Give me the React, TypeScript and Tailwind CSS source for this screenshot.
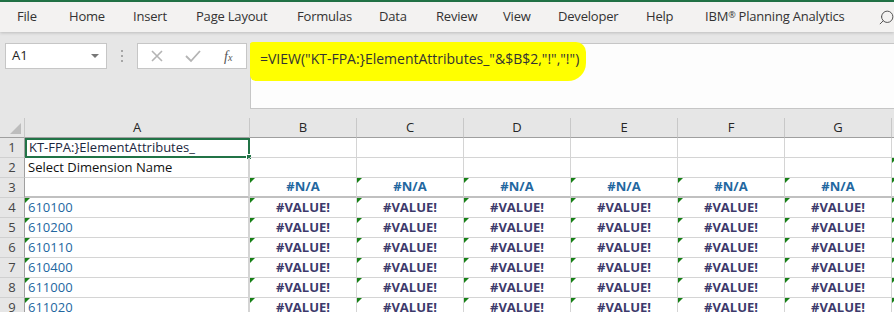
import { Search } from 'lucide-react';

const tabs = [
  { t: 'File', w: 'w-[52px]' },
  { t: 'Home', w: 'w-[64px]' },
  { t: 'Insert', w: 'w-[63px]' },
  { t: 'Page Layout', w: 'w-[101px]' },
  { t: 'Formulas', w: 'w-[82px]' },
  { t: 'Data', w: 'w-[57px]' },
  { t: 'Review', w: 'w-[67px]' },
  { t: 'View', w: 'w-[55px]' },
  { t: 'Developer', w: 'w-[88px]' },
  { t: 'Help', w: 'w-[59px]' },
];
const cols = ['B', 'C', 'D', 'E', 'F', 'G'];
const codes = ['610100', '610200', '610110', '610400', '611000', '611020'];
const formula = '=VIEW("KT-FPA:}ElementAttributes_"&$B$2,"!","!")';

const Flag = () => (
  <div className="absolute left-0 top-0 h-0 w-0 border-t-[5px] border-r-[5px] border-t-[#168016] border-r-transparent" />
);

const RowHead = ({ n }: { n: number }) => (
  <div className="flex h-[20px] items-center justify-center border-b border-r border-b-[#d0d0d0] border-r-[#9f9f9f] bg-[#e6e6e6] text-[13px] text-[#444]">
    {n}
  </div>
);

const Cell = ({ children, flag, thickBottom, className = '' }: { children?: React.ReactNode; flag?: boolean; thickBottom?: boolean; className?: string }) => (
  <div
    className={`relative flex h-[20px] items-center whitespace-nowrap border-r border-r-[#d4d4d4] ${thickBottom ? 'border-b-2 border-b-[#c0c0c0]' : 'border-b border-b-[#d4d4d4]'} ${className}`}
  >
    {flag && <Flag />}
    {children}
  </div>
);

export default function App() {
  return (
    <div className="h-[312px] w-[894px] overflow-hidden bg-white font-['Open_Sans',sans-serif]">
      <div className="h-[2px] bg-[#217346]" />
      <div className="relative flex h-[30px] items-center bg-[#f3f2f1] pl-[17px] text-[13px] tracking-[-0.2px] text-[#333] shadow-[0_1px_3px_rgba(0,0,0,0.18)]">
        {tabs.map(({ t, w }) => (
          <span key={t} className={`${w} shrink-0`}>
            {t}
          </span>
        ))}
        <span className="shrink-0">
          IBM<span className="align-[3px] text-[9px]">®</span> Planning Analytics
        </span>
        <Search className="absolute -right-[1px] top-[7px] h-[17px] w-[17px] -scale-x-100 text-[#555]" strokeWidth={1.4} />
      </div>

      <div className="flex h-[86px] bg-[#e6e6e6] pt-[11px]">
        <div className="ml-[5px] flex h-[26px] w-[102px] items-center justify-between border border-[#c6c6c6] bg-white pl-[6px] pr-[7px] text-[13px] text-[#222]">
          <span>A1</span>
          <span className="h-0 w-0 border-x-[4px] border-t-[4px] border-x-transparent border-t-[#777]" />
        </div>
        <div className="flex w-[30px] flex-col items-center gap-[3px] pt-[7px]">
          <span className="h-[2px] w-[2px] bg-[#a6a6a6]" />
          <span className="h-[2px] w-[2px] bg-[#a6a6a6]" />
          <span className="h-[2px] w-[2px] bg-[#a6a6a6]" />
        </div>
        <div className="flex h-[26px] w-[110px] items-center border border-[#c6c6c6] bg-white">
          <svg width="110" height="24" viewBox="0 0 110 24">
            <path d="M14 7 L24 17 M24 7 L14 17" stroke="#b4b4b4" strokeWidth="1.6" fill="none" />
            <path d="M48 12 L53 17 L62 7" stroke="#b4b4b4" strokeWidth="1.8" fill="none" />
          </svg>
          <span className="-ml-[24px] font-['Liberation_Serif',serif] text-[14px] italic text-[#555]">
            f<span className="text-[10px]">x</span>
          </span>
        </div>
        <div className="ml-[3px] h-[66px] flex-1 border border-[#c6c6c6] border-r-0 bg-[#fdfdfd]">
          <span className="-ml-[1px] -mt-[2px] inline-block rounded-[3px_10px_18px_6px] bg-[#ffff00] pb-[12px] pl-[10px] pr-[7px] pt-[6px] text-[14px] text-[#333]">
            {formula}
          </span>
        </div>
      </div>

      <div className="grid grid-cols-[25px_225px_repeat(6,107px)_107px] text-[13px]">
        <div className="relative h-[20px] border-b border-r border-b-[#9f9f9f] border-r-[#c8c8c8] bg-[#e6e6e6]">
          <div className="absolute bottom-[3px] right-[3px] h-0 w-0 border-b-[11px] border-l-[11px] border-b-[#bdbdbd] border-l-transparent" />
        </div>
        {['A', ...cols].map((c) => (
          <div
            key={c}
            className="flex h-[20px] items-center justify-center border-b border-r border-b-[#9f9f9f] border-r-[#c8c8c8] bg-[#e6e6e6] text-[13px] text-[#262626]"
          >
            {c}
          </div>
        ))}
        <div className="h-[20px] border-b border-b-[#9f9f9f] bg-[#e6e6e6]" />

        <RowHead n={1} />
        <div className="relative flex h-[20px] items-center border-2 border-[#217346] pl-[2px] text-[#1c2740]">
          <span>{'KT-FPA:}ElementAttributes_'}</span>
          <div className="absolute -bottom-[4px] -right-[4px] h-[6px] w-[6px] border border-white bg-[#217346]" />
        </div>
        {cols.map((c) => (
          <Cell key={c} />
        ))}
        <Cell />

        <RowHead n={2} />
        <Cell className="border-r-2 border-r-[#c0c0c0] pl-[3px] text-[#111]">Select Dimension Name</Cell>
        {cols.map((c) => (
          <Cell key={c} />
        ))}
        <Cell flag />

        <RowHead n={3} />
        <Cell thickBottom className="border-r-2 border-r-[#c0c0c0]" />
        {cols.map((c) => (
          <Cell key={c} flag thickBottom className="justify-center font-bold text-[#23679f]">
            #N/A
          </Cell>
        ))}
        <Cell flag thickBottom />

        {codes.map((code, i) => (
          <div key={code} className="contents">
            <RowHead n={i + 4} />
            <Cell flag className="border-r-2 border-r-[#c0c0c0] pl-[3px] text-[#23679f]">
              {code}
            </Cell>
            {cols.map((c) => (
              <Cell key={c} flag className="justify-center font-bold text-[#3d3a6b]">
                #VALUE!
              </Cell>
            ))}
            <Cell flag />
          </div>
        ))}
      </div>
    </div>
  );
}
